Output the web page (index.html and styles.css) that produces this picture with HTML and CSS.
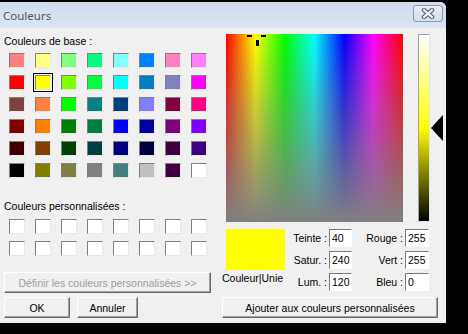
FILE: index.html
```html
<!DOCTYPE html>
<html lang="fr">
<head>
    <meta charset="UTF-8">
    <title>Couleurs</title>
    <link rel="stylesheet" href="styles.css">
</head>
<body>
    <div class="window">
        <div class="titlebar">
            <span class="title">Couleurs</span>
            <span class="close">
                <svg width="14" height="11" viewBox="0 0 14 11">
                    <path d="M3 2 L11 9 M11 2 L3 9" stroke="#6a7482" stroke-width="4.6" stroke-linecap="round"/>
                    <path d="M3 2 L11 9 M11 2 L3 9" stroke="#f4f7fa" stroke-width="2.2" stroke-linecap="round"/>
                </svg>
            </span>
        </div>

        <div class="client">
            <!-- Left side: palette -->
            <div class="left">
                <div class="label base-label">Couleurs de base :</div>
                <div class="swatches">
                    <span class="swatch" style="background:#ff8080"></span>
                    <span class="swatch" style="background:#ffff80"></span>
                    <span class="swatch" style="background:#80ff80"></span>
                    <span class="swatch" style="background:#00ff80"></span>
                    <span class="swatch" style="background:#80ffff"></span>
                    <span class="swatch" style="background:#0080ff"></span>
                    <span class="swatch" style="background:#ff80c0"></span>
                    <span class="swatch" style="background:#ff80ff"></span>

                    <span class="swatch" style="background:#ff0000"></span>
                    <span class="swatch selected" style="background:#ffff00"></span>
                    <span class="swatch" style="background:#80ff00"></span>
                    <span class="swatch" style="background:#00ff40"></span>
                    <span class="swatch" style="background:#00ffff"></span>
                    <span class="swatch" style="background:#0080c0"></span>
                    <span class="swatch" style="background:#8080c0"></span>
                    <span class="swatch" style="background:#ff00ff"></span>

                    <span class="swatch" style="background:#804040"></span>
                    <span class="swatch" style="background:#ff8040"></span>
                    <span class="swatch" style="background:#00ff00"></span>
                    <span class="swatch" style="background:#008080"></span>
                    <span class="swatch" style="background:#004080"></span>
                    <span class="swatch" style="background:#8080ff"></span>
                    <span class="swatch" style="background:#800040"></span>
                    <span class="swatch" style="background:#ff0080"></span>

                    <span class="swatch" style="background:#800000"></span>
                    <span class="swatch" style="background:#ff8000"></span>
                    <span class="swatch" style="background:#008000"></span>
                    <span class="swatch" style="background:#008040"></span>
                    <span class="swatch" style="background:#0000ff"></span>
                    <span class="swatch" style="background:#0000a0"></span>
                    <span class="swatch" style="background:#800080"></span>
                    <span class="swatch" style="background:#8000ff"></span>

                    <span class="swatch" style="background:#400000"></span>
                    <span class="swatch" style="background:#804000"></span>
                    <span class="swatch" style="background:#004000"></span>
                    <span class="swatch" style="background:#004040"></span>
                    <span class="swatch" style="background:#000080"></span>
                    <span class="swatch" style="background:#000040"></span>
                    <span class="swatch" style="background:#400040"></span>
                    <span class="swatch" style="background:#400080"></span>

                    <span class="swatch" style="background:#000000"></span>
                    <span class="swatch" style="background:#808000"></span>
                    <span class="swatch" style="background:#808040"></span>
                    <span class="swatch" style="background:#808080"></span>
                    <span class="swatch" style="background:#408080"></span>
                    <span class="swatch" style="background:#c0c0c0"></span>
                    <span class="swatch" style="background:#400040"></span>
                    <span class="swatch" style="background:#ffffff"></span>
                </div>

                <div class="label custom-label">Couleurs personnalisées :</div>
                <div class="swatches custom">
                    <span class="swatch"></span><span class="swatch"></span><span class="swatch"></span><span class="swatch"></span>
                    <span class="swatch"></span><span class="swatch"></span><span class="swatch"></span><span class="swatch"></span>
                    <span class="swatch"></span><span class="swatch"></span><span class="swatch"></span><span class="swatch"></span>
                    <span class="swatch"></span><span class="swatch"></span><span class="swatch"></span><span class="swatch"></span>
                </div>

                <button class="btn define" type="button" disabled>Définir les couleurs personnalisées &gt;&gt;</button>
                <div class="btn-row">
                    <button class="btn ok" type="button">OK</button>
                    <button class="btn cancel" type="button">Annuler</button>
                </div>
            </div>

            <!-- Right side: spectrum and values -->
            <div class="right">
                <div class="picker">
                    <div class="spectrum">
                        <svg class="cross" width="20" height="12" viewBox="0 0 20 12">
                            <rect x="0" y="0" width="5" height="2" fill="#000"/>
                            <rect x="14" y="0" width="5" height="2" fill="#000"/>
                            <rect x="9" y="5" width="3" height="6" fill="#000"/>
                        </svg>
                    </div>
                    <div class="lum-wrap">
                        <div class="lum"></div>
                        <span class="lum-arrow"></span>
                    </div>
                </div>

                <div class="values">
                    <div class="preview-col">
                        <div class="preview"></div>
                        <div class="label preview-label">Couleur|Unie</div>
                    </div>
                    <div class="fields">
                        <span class="label">Teinte :</span><span class="field">40</span>
                        <span class="label">Rouge :</span><span class="field">255</span>
                        <span class="label">Satur. :</span><span class="field">240</span>
                        <span class="label">Vert :</span><span class="field">255</span>
                        <span class="label">Lum. :</span><span class="field">120</span>
                        <span class="label">Bleu :</span><span class="field">0</span>
                    </div>
                </div>

                <button class="btn add" type="button">Ajouter aux couleurs personnalisées</button>
            </div>
        </div>
    </div>
</body>
</html>
```

FILE: styles.css
```css
body {
    margin: 0;
    background: #000;
    font-family: "Liberation Sans", Arial, sans-serif;
    font-size: 10.5px;
}

.window {
    margin-top: 2px;
    width: 446px;
    height: 321px;
    background: #f0f0f0;
    border-top-right-radius: 6px;
    overflow: hidden;
}

/* Title bar */
.titlebar {
    height: 26px;
    display: flex;
    align-items: center;
    justify-content: space-between;
    padding: 0 3px 0 3px;
    background: linear-gradient(#cfdcec, #dbe5f1);
}

.title {
    font-family: "Noto Sans", sans-serif;
    font-size: 11.5px;
    color: #555;
}

.close {
    width: 28px;
    height: 15px;
    margin-top: -4px;
    border: 1px solid #8b9bb0;
    border-radius: 3px;
    background: linear-gradient(#e7eef6, #d3deea);
    display: flex;
    align-items: center;
    justify-content: center;
}

/* Client area */
.client {
    display: flex;
}

.left {
    width: 218px;
    padding: 7px 0 0 4px;
}

.label {
    line-height: 13px;
    color: #000;
    white-space: nowrap;
}

.swatches {
    display: grid;
    grid-template-columns: repeat(8, 16px);
    grid-auto-rows: 15px;
    column-gap: 10px;
    row-gap: 7px;
    margin: 5px 0 0 5px;
}

.swatch {
    box-sizing: border-box;
    border: 1px solid;
    border-color: #808080 #e8e8e8 #e8e8e8 #808080;
}

.swatch.selected {
    outline: 1px solid #000;
    outline-offset: 1px;
}

.custom-label {
    margin-top: 22px;
}

.swatches.custom {
    margin-top: 6px;
}

.custom .swatch {
    background: #fff;
}

/* Buttons */
.btn {
    box-sizing: border-box;
    height: 21px;
    padding: 0;
    font-family: "Liberation Sans", Arial, sans-serif;
    font-size: 10.5px;
    color: #000;
    background: #f0f0f0;
    border: 1px solid;
    border-color: #fff #696969 #696969 #fff;
    box-shadow: inset -1px -1px 0 #a0a0a0;
}

.btn:disabled {
    color: #a0a0a0;
}

.define {
    width: 207px;
    margin-top: 16px;
}

.btn-row {
    display: flex;
    gap: 7px;
    margin-top: 4px;
}

.ok {
    width: 66px;
}

.cancel {
    width: 61px;
}

/* Right side */
.right {
    padding-top: 6px;
}

.picker {
    display: flex;
    margin-left: 4px;
}

.spectrum {
    position: relative;
    width: 177px;
    height: 188px;
    background:
        linear-gradient(rgba(128, 128, 128, 0), #808080),
        linear-gradient(to right, #f00, #ff0 16.7%, #0f0 33.3%, #0ff 50%, #00f 66.7%, #f0f 83.3%, #f00);
}

.cross {
    position: absolute;
    left: 21px;
    top: 1px;
}

.lum-wrap {
    position: relative;
    width: 26px;
    margin-left: 15px;
}

.lum {
    box-sizing: border-box;
    width: 12px;
    height: 188px;
    border: 1px solid;
    border-color: #a0a0a0 #e3e3e3 #e3e3e3 #a0a0a0;
    background: linear-gradient(#fff, #ff0 50%, #000);
}

.lum-arrow {
    position: absolute;
    left: 13px;
    top: 81px;
    width: 0;
    height: 0;
    border-top: 13px solid transparent;
    border-bottom: 13px solid transparent;
    border-right: 12px solid #000;
}

.values {
    display: flex;
    margin-top: 7px;
}

.preview-col {
    width: 64px;
}

.preview {
    width: 59px;
    height: 41px;
    margin-left: 4px;
    background: #ff0;
}

.preview-label {
    margin-top: 2px;
}

.fields {
    display: grid;
    grid-template-columns: 41px 23px 49px 24px;
    grid-auto-rows: 18px;
    column-gap: 2px;
    row-gap: 4px;
    align-items: center;
}

.fields .label {
    text-align: right;
}

.field {
    box-sizing: border-box;
    height: 18px;
    padding: 0 0 0 2px;
    line-height: 16px;
    background: #fff;
    border: 1px solid;
    border-color: #7a7a7a #fff #fff #7a7a7a;
}

.add {
    width: 216px;
    margin-top: 6px;
}
```
